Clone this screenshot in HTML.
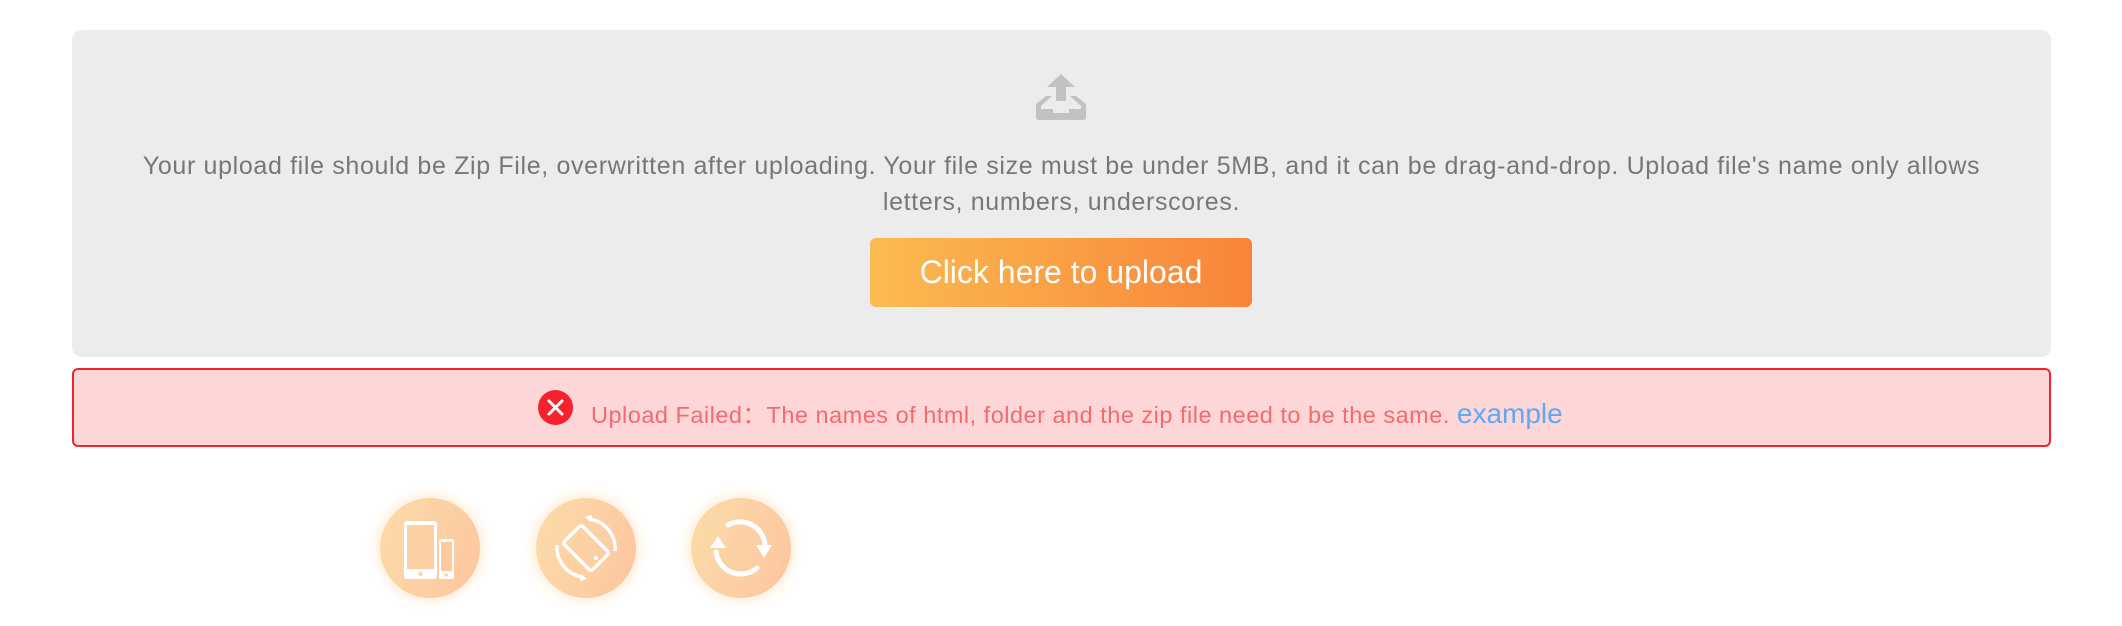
<!DOCTYPE html>
<html><head><meta charset="utf-8"><style>
body{margin:0;width:2122px;height:626px;background:#fff;font-family:"Liberation Sans",sans-serif;position:relative;overflow:hidden}
.box{position:absolute;left:72px;top:30px;width:1979px;height:327px;background:#ececec;border-radius:10px}
.txt{position:absolute;left:0;width:1979px;top:118px;text-align:center;color:#777;font-size:25px;line-height:36px;letter-spacing:0.65px;white-space:nowrap}
.btn{position:absolute;left:798px;top:208px;width:382px;height:69px;border-radius:6px;background:linear-gradient(90deg,#fbbb50,#f8843a);color:#fff;font-size:32px;line-height:69px;text-align:center}
.err{position:absolute;left:72px;top:368px;width:1975px;height:75px;background:#fdd6d7;border:2px solid #f5222d;border-radius:6px}
.ico{position:absolute;left:538px;top:390px;width:35px;height:35px;border-radius:50%;background:#f5222d}
.etxt{position:absolute;left:591px;top:396px;color:#f56a70;font-size:23.5px;letter-spacing:0.5px;white-space:nowrap}
.etxt a{color:#5fa8f5;font-size:28px;text-decoration:none;letter-spacing:0}
.c{position:absolute;top:498px;width:100px;height:100px;border-radius:50%;background:linear-gradient(110deg,#fcdca8,#fdc5a0);box-shadow:0 0 14px rgba(253,205,140,.6)}
</style></head><body>
<div class="box">
<svg style="position:absolute;left:964px;top:44px" width="50" height="46" viewBox="0 0 50 46"><path d="M25 0L39 13H30V27H20V13H11Z" fill="#c2c2c2"/><path d="M10 22H16L5 32V35H17V39H33V35H45V32L34 22H40L50 30V43Q50 46 47 46H3Q0 46 0 43V30Z" fill="#c2c2c2"/></svg>
<div class="txt">Your upload file should be Zip File, overwritten after uploading. Your file size must be under 5MB, and it can be drag-and-drop. Upload file's name only allows<br>letters, numbers, underscores.</div>
<div class="btn">Click here to upload</div>
</div>
<div class="err"></div>
<div class="ico"><svg width="35" height="35" viewBox="0 0 35 35"><path d="M11 11L24 24M24 11L11 24" stroke="#fff" stroke-width="3" stroke-linecap="round"/></svg></div>
<div class="etxt">Upload Failed：The names of html, folder and the zip file need to be the same. <a>example</a></div>
<div class="c" style="left:380px"><svg width="100" height="100" viewBox="0 0 100 100"><rect x="24" y="23" width="33" height="58" rx="3" fill="#fff"/><rect x="27" y="27" width="27" height="44" fill="#fdd0a3"/><circle cx="40.5" cy="76" r="2" fill="#fdd0a3"/><rect x="59" y="41" width="15" height="40" rx="2" fill="#fff"/><rect x="61" y="44" width="11" height="29" fill="#fdc9a0"/><circle cx="66.5" cy="77" r="1.5" fill="#fdc9a0"/></svg></div>
<div class="c" style="left:536px"><svg width="100" height="100" viewBox="0 0 100 100"><g transform="rotate(-45 50 50)"><rect x="37" y="30" width="26" height="40" rx="3" fill="none" stroke="#fff" stroke-width="3.5"/><circle cx="50" cy="64" r="2.2" fill="#fff"/></g><path d="M53 21A30 30 0 0 1 79 53" stroke="#fff" stroke-width="3.5" fill="none"/><path d="M47 79A30 30 0 0 1 21 47" stroke="#fff" stroke-width="3.5" fill="none"/><path d="M49 19L56 17L55 24Z" fill="#fff"/><path d="M51 81L44 83L45 76Z" fill="#fff"/></svg></div>
<div class="c" style="left:691px"><svg width="100" height="100" viewBox="0 0 100 100"><path d="M37 27A25 25 0 0 1 74 48" stroke="#fff" stroke-width="5" fill="none" stroke-linecap="round"/><path d="M66 70A25 25 0 0 1 25 54" stroke="#fff" stroke-width="5" fill="none" stroke-linecap="round"/><path d="M65 47H81L73 60Z" fill="#fff"/><path d="M19 50H35L27 38Z" fill="#fff"/></svg></div>
</body></html>
